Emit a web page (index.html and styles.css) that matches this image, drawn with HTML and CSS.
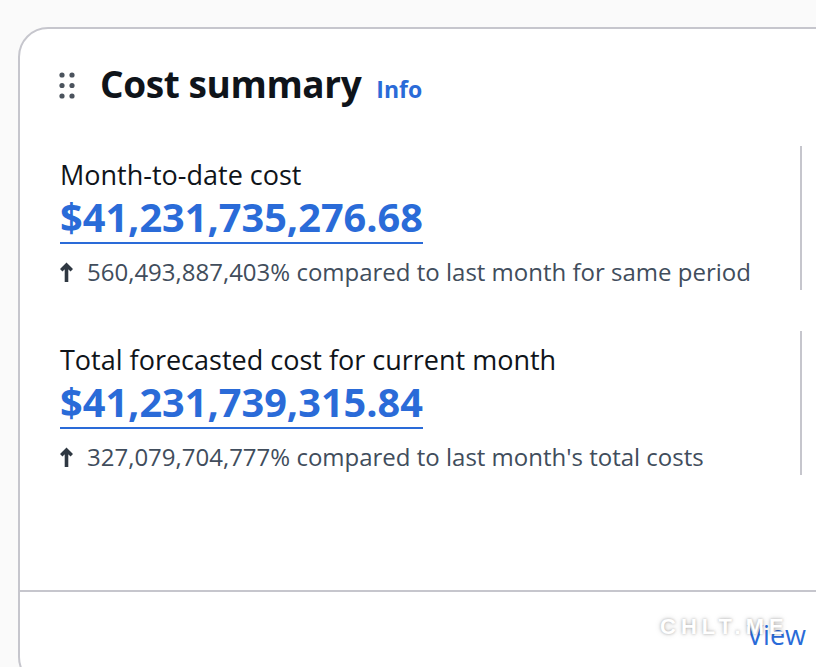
FILE: index.html
```html
<!DOCTYPE html>
<html lang="en">
<head>
    <meta charset="UTF-8">
    <meta name="viewport" content="width=device-width, initial-scale=1.0">
    <title>Cost summary</title>
    <link rel="stylesheet" href="styles.css">
</head>
<body>

    <div class="widget">
        <div class="widget-header">
            <!-- drag handle -->
            <svg class="handle" width="16" height="27" viewBox="0 0 16 27">
                <circle cx="3" cy="3" r="2.6"/>
                <circle cx="13" cy="3" r="2.6"/>
                <circle cx="3" cy="13.5" r="2.6"/>
                <circle cx="13" cy="13.5" r="2.6"/>
                <circle cx="3" cy="24" r="2.6"/>
                <circle cx="13" cy="24" r="2.6"/>
            </svg>
            <h2>Cost summary</h2>
            <a class="info" href="#">Info</a>
        </div>

        <div class="widget-body">
            <div class="metric">
                <div class="metric-label">Month-to-date cost</div>
                <a class="metric-value" href="#">$41,231,735,276.68</a>
                <div class="metric-change">
                    <svg class="arrow" width="13" height="20" viewBox="0 0 13 20">
                        <path d="M6.5 20V3M1.2 8.3L6.5 3l5.3 5.3"/>
                    </svg>
                    <span>560,493,887,403% compared to last month for same period</span>
                </div>
            </div>

            <div class="metric">
                <div class="metric-label">Total forecasted cost for current month</div>
                <a class="metric-value" href="#">$41,231,739,315.84</a>
                <div class="metric-change">
                    <svg class="arrow" width="13" height="20" viewBox="0 0 13 20">
                        <path d="M6.5 20V3M1.2 8.3L6.5 3l5.3 5.3"/>
                    </svg>
                    <span>327,079,704,777% compared to last month's total costs</span>
                </div>
            </div>
        </div>

        <div class="widget-footer">
            <a class="view" href="#">View</a>
        </div>
    </div>

    <span class="stamp">CHLT.ME</span>

</body>
</html>
```

FILE: styles.css
```css
body {
    margin: 0;
    height: 667px;
    overflow: hidden;
    background-color: #fafafa;
    font-family: "Open Sans", Arial, sans-serif;
    color: #0f141a;
}
a {
    color: #2a6bd8;
    text-decoration: none;
}
.widget {
    margin: 27px 0 0 18px;
    width: 1000px;
    height: 660px;
    background: white;
    border: 2px solid #c6c6cd;
    border-radius: 30px;
    box-sizing: border-box;
    display: flex;
    flex-direction: column;
}
.widget-header {
    display: flex;
    align-items: baseline;
    padding: 30px 0 0 39px;
}
.handle {
    align-self: flex-start;
    margin: 13px 25px 0 0;
    fill: #4b535d;
}
.widget-header h2 {
    margin: 0;
    font-size: 37px;
    font-weight: 700;
    line-height: 50px;
    letter-spacing: -0.4px;
}
.info {
    font-size: 23px;
    font-weight: 700;
    margin-left: 15px;
}
.widget-body {
    display: flex;
    flex-direction: column;
    gap: 41px;
    padding: 37px 0 0 40px;
}
.metric {
    width: 742px;
    height: 144px;
    border-right: 2px solid #c6c6cd;
    box-sizing: border-box;
    padding-top: 10px;
}
.metric-label {
    font-size: 27px;
    line-height: 37px;
}
.metric-value {
    display: block;
    width: fit-content;
    font-size: 39.7px;
    font-weight: 700;
    line-height: 49px;
    border-bottom: 2px solid #2a6bd8;
}
.metric-change {
    display: flex;
    align-items: center;
    gap: 14px;
    margin-top: 12px;
    font-size: 24px;
    line-height: 32px;
    color: #414d5c;
}
.arrow {
    flex-shrink: 0;
    fill: none;
    stroke: #2f3842;
    stroke-width: 3.6;
}
.widget-footer {
    margin-top: auto;
    height: 95px;
    box-sizing: border-box;
    border-top: 2px solid #c6c6cd;
    padding: 25px 0 0 727px;
}
.view {
    font-size: 27px;
    line-height: 36px;
}
.stamp {
    position: absolute;
    left: 660px;
    top: 614px;
    font-family: "Liberation Sans", Arial, sans-serif;
    font-size: 22px;
    font-weight: 700;
    letter-spacing: 5px;
    color: white;
    text-shadow: 0 0 3px rgba(0, 0, 0, 0.3), 0 0 6px rgba(0, 0, 0, 0.15);
}
```
